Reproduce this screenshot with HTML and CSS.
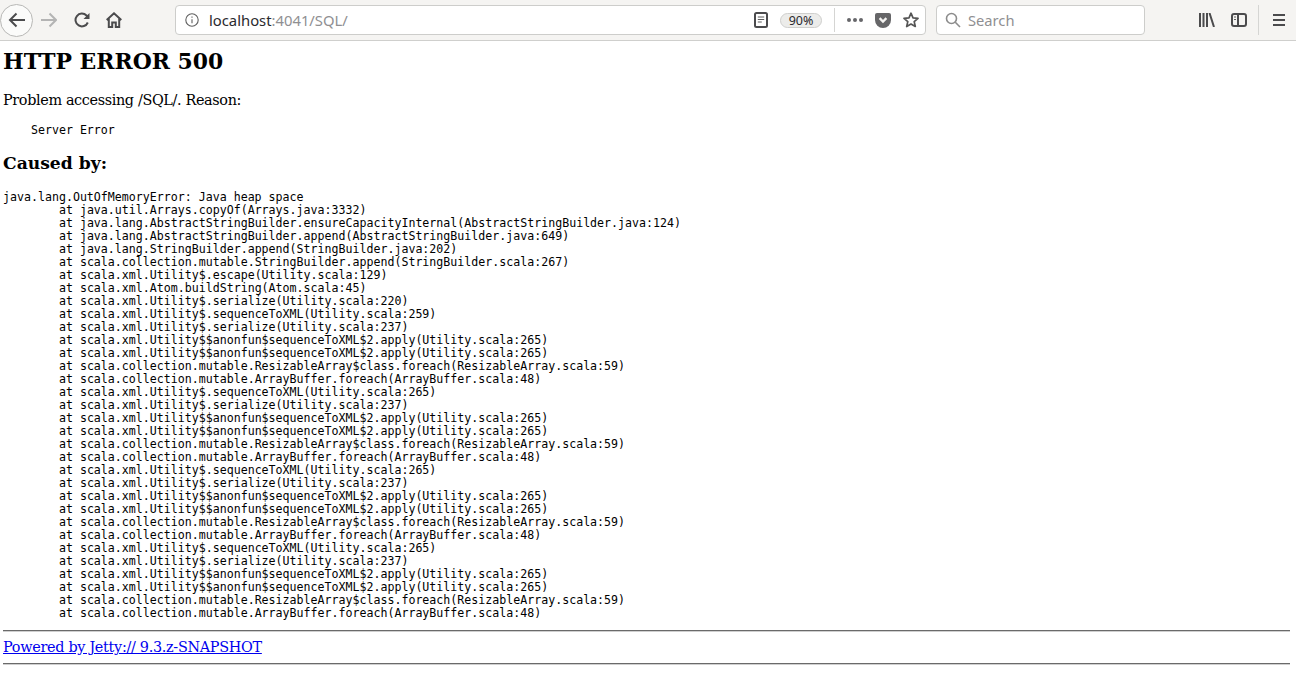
FILE: index.html
```html
<!DOCTYPE html>
<html lang="en">
<head>
<meta charset="utf-8">
<title>Error 500 Server Error</title>
<link rel="stylesheet" href="styles.css">
</head>
<body>
<header class="toolbar">
  <div class="nav">
    <button class="back" aria-label="Back"><svg width="18" height="18" viewBox="0 0 18 18"><path d="M17 9H2M8.500 2.500 2 9l6.500 6.500" class="ic2"/></svg></button>
    <svg class="forward" width="16" height="16" viewBox="0 0 16 16"><path d="M0 8h15M8.500 1.500 15 8l-6.500 6.500" class="ic-dis"/></svg>
    <svg class="reload" width="16" height="16" viewBox="0 0 16 16"><path d="M13.800 10.500A6.400 6.400 0 1 1 12.500 3.500L14.500 5.500" class="ic2"/><path d="M15.500 1v6h-6z" class="fill"/></svg>
    <svg class="home" width="16" height="16" viewBox="0 0 16 16"><path d="M.7 8 8 1.300 15.300 8M2.800 6.500V15h3.400v-4.500h3.600V15h3.400V6.500" class="ic2"/></svg>
  </div>
  <div class="urlbar">
    <svg class="info" width="14" height="14" viewBox="0 0 14 14"><circle cx="7" cy="7" r="6.200" class="ic1"/><path d="M7 6.200v4M7 3.400v1.400" class="ic1"/></svg>
    <span class="url"><span class="host">localhost</span><span class="rest">:4041/SQL/</span></span>
    <span class="spacer"></span>
    <svg class="reader" width="14" height="16" viewBox="0 0 14 16"><rect x="1" y="1" width="12" height="14" rx="1.500" class="ic2"/><path d="M3.800 5h6.400M3.800 7.500h6.400M3.800 10h4" class="ic1"/></svg>
    <span class="zoom">90%</span>
    <span class="sep"></span>
    <span class="dots"><i></i><i></i><i></i></span>
    <svg class="pocket" width="16" height="15" viewBox="0 0 16 15"><path d="M2 0h12a2 2 0 0 1 2 2v5a8 8 0 0 1-16 0V2a2 2 0 0 1 2-2z" class="pocket-fill"/><path d="M4.600 5.200 8 8.500l3.400-3.300" class="knock"/></svg>
    <svg class="star" width="16" height="16" viewBox="0 0 16 16"><path d="M8 1.200 10 5.800l5 .5-3.800 3.300 1.100 4.900L8 12l-4.300 2.500 1.100-4.900L1 6.300l5-.5z" class="ic-star"/></svg>
  </div>
  <div class="searchbar">
    <svg width="16" height="16" viewBox="0 0 16 16"><circle cx="6.500" cy="6.500" r="5" class="ic-search"/><path d="M10.300 10.300 15 15" class="ic-search"/></svg>
    <span>Search</span>
  </div>
  <div class="tools">
    <svg class="library" width="16" height="14" viewBox="0 0 16 14"><path d="M1 0v14M4.500 0v14M8 0v14M10.500 0 15 14" class="ic2"/></svg>
    <svg class="sidebar" width="16" height="14" viewBox="0 0 16 14"><rect x="1" y="1" width="14" height="12" rx="2" class="ic2"/><path d="M7 1v12" class="ic2"/><path d="M3 4h2M3 6.500h2" class="ic1"/></svg>
    <span class="sep tall"></span>
    <svg class="menu" width="14" height="12" viewBox="0 0 14 12"><path d="M1 1h12M1 6h12M1 11h12" class="ic2"/></svg>
  </div>
</header>
<main class="page">
  <h2>HTTP ERROR 500</h2>
  <p>Problem accessing /SQL/. Reason:</p>
  <pre class="reason">    Server Error</pre>
  <h3>Caused by:</h3>
  <pre class="trace">java.lang.OutOfMemoryError: Java heap space
	at java.util.Arrays.copyOf(Arrays.java:3332)
	at java.lang.AbstractStringBuilder.ensureCapacityInternal(AbstractStringBuilder.java:124)
	at java.lang.AbstractStringBuilder.append(AbstractStringBuilder.java:649)
	at java.lang.StringBuilder.append(StringBuilder.java:202)
	at scala.collection.mutable.StringBuilder.append(StringBuilder.scala:267)
	at scala.xml.Utility$.escape(Utility.scala:129)
	at scala.xml.Atom.buildString(Atom.scala:45)
	at scala.xml.Utility$.serialize(Utility.scala:220)
	at scala.xml.Utility$.sequenceToXML(Utility.scala:259)
	at scala.xml.Utility$.serialize(Utility.scala:237)
	at scala.xml.Utility$$anonfun$sequenceToXML$2.apply(Utility.scala:265)
	at scala.xml.Utility$$anonfun$sequenceToXML$2.apply(Utility.scala:265)
	at scala.collection.mutable.ResizableArray$class.foreach(ResizableArray.scala:59)
	at scala.collection.mutable.ArrayBuffer.foreach(ArrayBuffer.scala:48)
	at scala.xml.Utility$.sequenceToXML(Utility.scala:265)
	at scala.xml.Utility$.serialize(Utility.scala:237)
	at scala.xml.Utility$$anonfun$sequenceToXML$2.apply(Utility.scala:265)
	at scala.xml.Utility$$anonfun$sequenceToXML$2.apply(Utility.scala:265)
	at scala.collection.mutable.ResizableArray$class.foreach(ResizableArray.scala:59)
	at scala.collection.mutable.ArrayBuffer.foreach(ArrayBuffer.scala:48)
	at scala.xml.Utility$.sequenceToXML(Utility.scala:265)
	at scala.xml.Utility$.serialize(Utility.scala:237)
	at scala.xml.Utility$$anonfun$sequenceToXML$2.apply(Utility.scala:265)
	at scala.xml.Utility$$anonfun$sequenceToXML$2.apply(Utility.scala:265)
	at scala.collection.mutable.ResizableArray$class.foreach(ResizableArray.scala:59)
	at scala.collection.mutable.ArrayBuffer.foreach(ArrayBuffer.scala:48)
	at scala.xml.Utility$.sequenceToXML(Utility.scala:265)
	at scala.xml.Utility$.serialize(Utility.scala:237)
	at scala.xml.Utility$$anonfun$sequenceToXML$2.apply(Utility.scala:265)
	at scala.xml.Utility$$anonfun$sequenceToXML$2.apply(Utility.scala:265)
	at scala.collection.mutable.ResizableArray$class.foreach(ResizableArray.scala:59)
	at scala.collection.mutable.ArrayBuffer.foreach(ArrayBuffer.scala:48)</pre>
  <hr>
  <a class="powered" href="#">Powered by Jetty:// 9.3.z-SNAPSHOT</a>
  <hr>
</main>
</body>
</html>
```
FILE: styles.css
```css
html, body { margin: 0; padding: 0; height: 100%; overflow: hidden; background: #fff; }
body { font-family: "DejaVu Serif", serif; font-size: 14.4px; color: #000; }

.toolbar { display: flex; align-items: center; height: 40px; background: #f5f4f2; border-bottom: 1px solid #cfcfcd; }
.nav { display: flex; align-items: center; width: 175px; flex: none; }
.back { width: 33px; height: 33px; padding: 0; border: 1px solid #b8b8b6; border-radius: 50%; background: #fbfbfa; display: flex; align-items: center; justify-content: center; flex: none; }
.forward { margin-left: 8px; }
.reload { margin-left: 17px; }
.home { margin-left: 16px; }

.ic1, .ic2, .ic-dis, .ic-star, .ic-search, .knock { fill: none; }
.ic1 { stroke: #5f5f5f; stroke-width: 1.100; }
.ic2 { stroke: #4b4b4d; stroke-width: 2; }
.ic-dis { stroke: #b4b4b4; stroke-width: 2; }
.fill { fill: #4b4b4d; }
.pocket-fill { fill: #666668; }
.knock { stroke: #f5f4f2; stroke-width: 2.400; }
.ic-star { stroke: #555; stroke-width: 1.700; stroke-linejoin: round; }
.ic-search { stroke: #8c8c8c; stroke-width: 1.600; }

.urlbar, .searchbar { display: flex; align-items: center; height: 30px; box-sizing: border-box; background: #fff; border: 1px solid #cdcdcb; border-radius: 4px; font-family: "Noto Sans", sans-serif; flex: none; }
.urlbar { width: 751px; padding: 0 6px 0 9px; }
.info { flex: none; }
.url { margin-left: 10px; font-size: 14.800px; }
.host { color: #2a2a2e; }
.rest { color: #8f8f92; }
.spacer { flex: 1; }
.reader { margin-right: 12px; }
.zoom { display: block; width: 42px; height: 15px; margin-right: 12px; box-sizing: border-box; line-height: 13px; text-align: center; font-size: 12.500px; color: #2a2a2e; background: #ececea; border: 1px solid #cfcfcd; border-radius: 8px; }
.sep { display: block; width: 1px; height: 24px; background: #d5d5d3; margin-right: 12px; }
.sep.tall { height: 30px; margin: 0 13px 0 11px; }
.dots { display: flex; gap: 2px; margin-right: 12px; }
.dots i { display: block; width: 4px; height: 4px; border-radius: 50%; background: #66666a; }
.pocket { margin-right: 12px; }

.searchbar { width: 209px; margin-left: 10px; padding-left: 8px; font-size: 14.700px; color: #8f8f92; }
.searchbar span { margin-left: 7px; }

.tools { display: flex; align-items: center; margin-left: 54px; }
.sidebar { margin-left: 16px; }

.page { padding: 0 6px 0 3px; }
h2 { margin: 0; padding-top: 7px; font-size: 21.900px; line-height: 26px; font-weight: bold; }
p { margin: 18px 0 0; line-height: 17px; letter-spacing: -.36px; }
pre { margin: 0; font-family: "DejaVu Sans Mono", monospace; font-size: 11.628px; line-height: 13px; }
.reason { margin-top: 15px; }
h3 { margin: 16px 0 0; font-size: 17.150px; line-height: 20px; font-weight: bold; }
.trace { margin-top: 18px; }
hr { margin: 10px 0 0; height: 2px; border: 0; border-top: 1px solid #6a6a6a; border-bottom: 1px solid #cfcfcf; box-sizing: border-box; }
.powered { display: block; margin-top: 7px; line-height: 17px; letter-spacing: -.3px; color: #00e; text-decoration: underline; }
.powered + hr { margin-top: 7px; }
```
